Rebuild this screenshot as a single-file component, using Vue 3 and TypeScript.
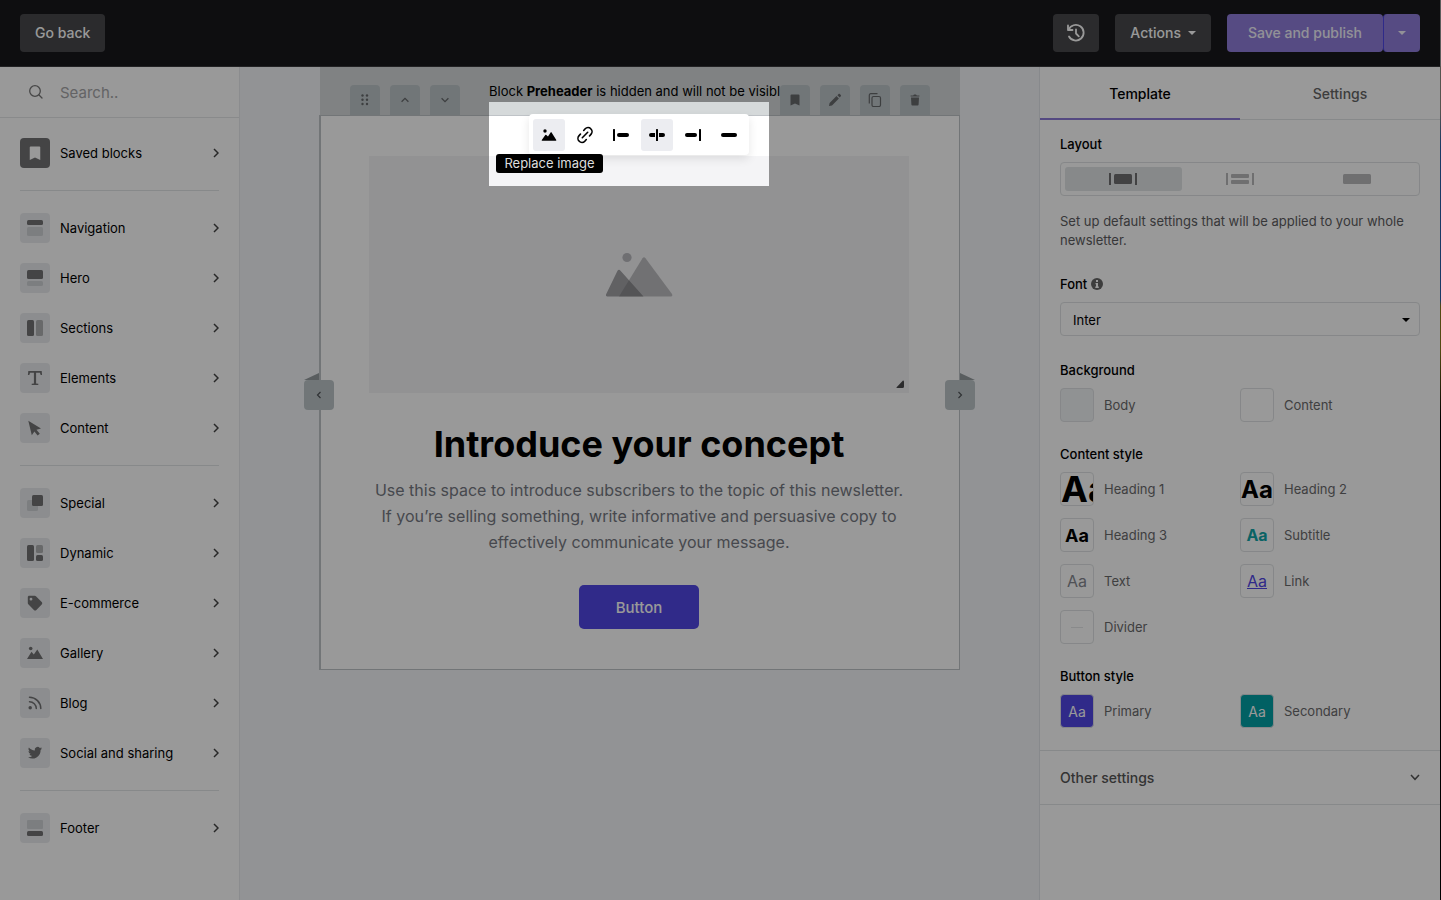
<script setup lang="ts">
import { ref } from 'vue'

interface BlockItem { label: string; icon: string; strong?: boolean }
interface StyleItem { label: string; kind: string; sample: string }

const groups: BlockItem[][] = [
  [{ label: 'Saved blocks', icon: 'saved', strong: true }],
  [
    { label: 'Navigation', icon: 'navigation' },
    { label: 'Hero', icon: 'hero' },
    { label: 'Sections', icon: 'sections' },
    { label: 'Elements', icon: 'elements' },
    { label: 'Content', icon: 'content' },
  ],
  [
    { label: 'Special', icon: 'special' },
    { label: 'Dynamic', icon: 'dynamic' },
    { label: 'E-commerce', icon: 'tag' },
    { label: 'Gallery', icon: 'gallery' },
    { label: 'Blog', icon: 'blog' },
    { label: 'Social and sharing', icon: 'social' },
  ],
  [{ label: 'Footer', icon: 'footer' }],
]

const backgrounds: StyleItem[] = [
  { label: 'Body', kind: 'bg-body', sample: '' },
  { label: 'Content', kind: 'bg-content', sample: '' },
]
const contentStyles: StyleItem[] = [
  { label: 'Heading 1', kind: 'h1', sample: 'Aa' },
  { label: 'Heading 2', kind: 'h2', sample: 'Aa' },
  { label: 'Heading 3', kind: 'h3', sample: 'Aa' },
  { label: 'Subtitle', kind: 'subtitle', sample: 'Aa' },
  { label: 'Text', kind: 'text', sample: 'Aa' },
  { label: 'Link', kind: 'link', sample: 'Aa' },
  { label: 'Divider', kind: 'divider', sample: '' },
]
const buttonStyles: StyleItem[] = [
  { label: 'Primary', kind: 'primary', sample: 'Aa' },
  { label: 'Secondary', kind: 'secondary', sample: 'Aa' },
]
const sections = [
  { title: 'Background', items: backgrounds },
  { title: 'Content style', items: contentStyles },
  { title: 'Button style', items: buttonStyles },
]

const search = ref('')
const font = ref('Inter')
</script>

<template>
  <div class="page">
    <div class="app">
      <header class="topbar">
        <button class="btn dark">Go back</button>
        <div class="topbar-right">
          <button class="btn dark history" aria-label="History">
            <svg width="20" height="20" viewBox="0 0 20 20" fill="none" stroke="currentColor" stroke-width="1.8" stroke-linecap="round" stroke-linejoin="round">
              <path d="M2.600 6.800A7.800 7.800 0 1 1 3 13.500" />
              <path d="M2 2.500v4.500h4.500" />
              <path d="M10 6.300v4.200l2.800 2.800" />
            </svg>
          </button>
          <button class="btn dark">Actions <span class="caret"></span></button>
          <div class="split">
            <button class="btn purple main">Save and publish</button>
            <button class="btn purple more" aria-label="More publish options"><span class="caret"></span></button>
          </div>
        </div>
      </header>

      <div class="workspace">
        <aside class="sidebar">
          <label class="search">
            <svg width="16" height="16" viewBox="0 0 16 16" fill="none" stroke="currentColor" stroke-width="1.300" stroke-linecap="round">
              <circle cx="7" cy="7" r="5.300" /><path d="M11 11l3 3" />
            </svg>
            <input v-model="search" type="text" placeholder="Search.." aria-label="Search" />
          </label>
          <nav>
            <ul v-for="(group, g) in groups" :key="g" class="group">
              <li v-for="item in group" :key="item.label">
                <button class="block">
                  <span class="tile" :class="{ strong: item.strong }">
                    <svg width="16" height="16" viewBox="0 0 16 16" fill="currentColor">
                      <path v-if="item.icon === 'saved'" d="M3 0.500h10a1 1 0 0 1 1 1V16l-6-3-6 3V1.500a1 1 0 0 1 1-1z" />
                      <g v-else-if="item.icon === 'navigation'">
                        <rect width="16" height="5" rx="1.500" /><rect class="soft" y="7" width="16" height="9" rx="1.500" />
                      </g>
                      <g v-else-if="item.icon === 'hero'">
                        <rect width="16" height="9" rx="1.500" /><rect class="soft" y="11" width="16" height="5" rx="1.500" />
                      </g>
                      <g v-else-if="item.icon === 'sections'">
                        <rect width="7" height="16" rx="1.500" /><rect class="mid" x="9" width="7" height="16" rx="1.500" />
                      </g>
                      <path v-else-if="item.icon === 'elements'" d="M1.300 1h13.400l.4 4h-1.400l-.8-2.200H9.100v10.600l2.200.4V15H4.700v-1.200l2.200-.4V2.800H3.100L2.300 5H.9z" />
                      <path v-else-if="item.icon === 'content'" d="M1.300 .8l12.700 7.600-4.500 1.300 3.300 4-2.200 1.700-3.200-4-2.600 3.800z" />
                      <g v-else-if="item.icon === 'special'">
                        <rect class="soft" y="5" width="11" height="11" rx="1.500" /><rect x="5" width="11" height="11" rx="1.500" />
                      </g>
                      <g v-else-if="item.icon === 'dynamic'">
                        <rect width="7" height="16" rx="1.500" /><rect class="mid" x="9" width="7" height="8" rx="1.500" /><rect x="9" y="10" width="7" height="6" rx="1.500" />
                      </g>
                      <path v-else-if="item.icon === 'tag'" fill-rule="evenodd" d="M2.200 .8h5.600c.5 0 1 .2 1.400.6l5.500 5.700c.7.7.7 1.800 0 2.500l-5.300 5.300c-.7.700-1.800.700-2.500 0L1.300 9.200A2 2 0 0 1 .8 7.900V2.200C.8 1.400 1.400.8 2.200.8zM4 2.800a1.400 1.400 0 1 0 0 2.800 1.400 1.400 0 0 0 0-2.800z" />
                      <g v-else-if="item.icon === 'gallery'">
                        <circle cx="3.700" cy="3.500" r="1.800" /><path d="M0 14l4.500-7.200 2.300 2.700L10.300 4.500 16 14z" />
                      </g>
                      <g v-else-if="item.icon === 'blog'" fill="none" stroke="currentColor" stroke-width="1.500" stroke-linecap="round">
                        <circle cx="3.200" cy="12.800" r="1" fill="currentColor" /><path d="M2.500 6.800a6.800 6.800 0 0 1 6.800 6.800M2.500 2.300a11.300 11.300 0 0 1 11.300 11.300" />
                      </g>
                      <path v-else-if="item.icon === 'social'" d="M15 3.300c-.5.300-1 .4-1.600.5.600-.4 1-.9 1.200-1.600-.5.300-1.100.600-1.800.7a2.900 2.900 0 0 0-5 2.600C5.400 5.400 3.300 4.300 1.900 2.600c-.8 1.300-.4 3 .9 3.900-.5 0-.9-.1-1.300-.4 0 1.500 1 2.600 2.300 2.900-.4.100-.9.100-1.300 0 .4 1.200 1.400 2 2.700 2A5.900 5.900 0 0 1 1 12.200 8.200 8.200 0 0 0 13.600 4.900c.6-.4 1.100-.9 1.400-1.600z" />
                      <g v-else>
                        <rect class="soft" width="16" height="9" rx="1" /><rect y="11" width="16" height="5" rx="1.500" />
                      </g>
                    </svg>
                  </span>
                  <span class="block-label">{{ item.label }}</span>
                  <svg class="chev" width="6" height="10" viewBox="0 0 6 10" fill="none" stroke="currentColor" stroke-width="1.500"><path d="M1 1l4 4-4 4" /></svg>
                </button>
              </li>
            </ul>
          </nav>
        </aside>

        <main class="canvas">
          <div class="stage">
            <div class="preheader">
              <div class="handles">
                <button class="handle" aria-label="Drag">
                  <svg width="8" height="12" viewBox="0 0 8 12" fill="currentColor"><circle cx="1.500" cy="1.500" r="1.200" /><circle cx="6" cy="1.500" r="1.200" /><circle cx="1.500" cy="5.800" r="1.200" /><circle cx="6" cy="5.800" r="1.200" /><circle cx="1.500" cy="10" r="1.200" /><circle cx="6" cy="10" r="1.200" /></svg>
                </button>
                <button class="handle" aria-label="Move up">
                  <svg width="8" height="6" viewBox="0 0 8 6" fill="none" stroke="currentColor" stroke-width="1.300"><path d="M.6 4.800L4 1.400l3.400 3.400" /></svg>
                </button>
                <button class="handle" aria-label="Move down">
                  <svg width="8" height="6" viewBox="0 0 8 6" fill="none" stroke="currentColor" stroke-width="1.300"><path d="M.6 1.200L4 4.600l3.400-3.400" /></svg>
                </button>
              </div>
              <p class="notice">Block <strong>Preheader</strong> is hidden and will not be visibl</p>
              <div class="handles">
                <button class="handle" aria-label="Save block">
                  <svg width="10" height="12" viewBox="0 0 10 12" fill="currentColor"><path d="M1.500 .5h7a1 1 0 0 1 1 1v10L5 9.500l-4.500 2v-10a1 1 0 0 1 1-1z" /></svg>
                </button>
                <button class="handle" aria-label="Edit block">
                  <svg width="14" height="14" viewBox="0 0 14 14" fill="currentColor"><path d="M1 13l.6-3L8.500 3l2.400 2.400L4 12.400zM9.400 2.200l1.200-1.100c.4-.4.9-.4 1.200 0l1 1c.4.400.4.900 0 1.200l-1.100 1.200z" /></svg>
                </button>
                <button class="handle" aria-label="Duplicate block">
                  <svg width="14" height="14" viewBox="0 0 14 14" fill="none" stroke="currentColor" stroke-width="1.200"><rect x="4" y="3.500" width="8.500" height="10" rx="1.500" /><path d="M1.300 10.500V2.300C1.300 1.300 1.900.7 2.800.7h6.700" /></svg>
                </button>
                <button class="handle" aria-label="Delete block">
                  <svg width="10" height="12" viewBox="0 0 10 12" fill="currentColor"><path d="M1 3.500h8l-.4 7a1 1 0 0 1-1 1H2.400a1 1 0 0 1-1-1zM.6 1.400h2.600L4 .5h2l.8.9h2.600v1.200H.6z" /></svg>
                </button>
              </div>
            </div>

            <article class="card">
              <div class="placeholder">
                <svg width="68" height="46" viewBox="0 0 68 46">
                  <circle cx="22" cy="5.500" r="4.600" fill="#b9b9be" />
                  <path d="M37.500 6.300q1.500-2 3 0L67 42q1 2-1 2.500H14z" fill="#bdbdc0" />
                  <path d="M12.500 18.800q1.500-2 3 0L38.500 44.500H2Q.5 44 1 42.500z" fill="#6b6b70" fill-opacity=".6" />
                </svg>
                <svg class="grip" width="8" height="8" viewBox="0 0 8 8" fill="#4a4a4c"><path d="M7 0.500q1 0 1 1V6.500q0 1.500-1.500 1.500H1q-1 0-.4-.8z" /></svg>
              </div>
              <h1>Introduce your concept</h1>
              <p class="copy">Use this space to introduce subscribers to the topic of this newsletter.<br />If you’re selling something, write informative and persuasive copy to<br />effectively communicate your message.</p>
              <button class="cta">Button</button>

              <button class="side left" aria-label="Previous variant">
                <svg class="fold" width="15" height="7" viewBox="0 0 15 7"><path d="M0 7L15 0v7z" /></svg>
                <svg width="6" height="8" viewBox="0 0 6 8" fill="none" stroke="currentColor" stroke-width="1.200"><path d="M4.500 1L1.500 4l3 3" /></svg>
              </button>
              <button class="side right" aria-label="Next variant">
                <svg class="fold" width="15" height="7" viewBox="0 0 15 7"><path d="M0 0l15 7H0z" /></svg>
                <svg width="6" height="8" viewBox="0 0 6 8" fill="none" stroke="currentColor" stroke-width="1.200"><path d="M1.500 1l3 3-3 3" /></svg>
              </button>
            </article>

            <div class="toolbar" role="toolbar" aria-label="Image tools">
              <button class="tool on" aria-label="Replace image">
                <svg width="16" height="16" viewBox="0 0 16 16" fill="currentColor"><circle cx="4" cy="4" r="1.700" /><path d="M1 13.800Q.5 13.800.8 13L4.300 7.900q.5-.5 1 0l1.700 1.500 2.600-4q.5-.7 1 0L15.300 13q.2.8-.5.8z" /></svg>
              </button>
              <button class="tool" aria-label="Link">
                <svg width="18" height="18" viewBox="0 0 18 18" fill="none" stroke="currentColor" stroke-width="1.600" stroke-linecap="round"><path d="M6.300 11.700l5.400-5.400M7.700 4.500l1.500-1.700a3.800 3.800 0 0 1 5.600 0 3.800 3.800 0 0 1 .3 5.300L13.500 10M10.300 13.500l-1.500 1.700a3.800 3.800 0 0 1-5.600 0 3.800 3.800 0 0 1-.3-5.300L4.500 8" /></svg>
              </button>
              <button class="tool" aria-label="Align left">
                <svg width="18" height="14" viewBox="0 0 18 14" fill="currentColor"><rect x="1" y="1" width="2" height="12" rx=".6" /><rect x="5" y="5" width="12" height="4" rx="2" /></svg>
              </button>
              <button class="tool on" aria-label="Align center">
                <svg width="18" height="14" viewBox="0 0 18 14" fill="currentColor"><rect x="8" y="1" width="2" height="12" rx=".6" /><path d="M3 5h4v4H3a2 2 0 0 1 0-4zM11 5h4a2 2 0 0 1 0 4h-4z" /></svg>
              </button>
              <button class="tool" aria-label="Align right">
                <svg width="18" height="14" viewBox="0 0 18 14" fill="currentColor"><rect x="15" y="1" width="2" height="12" rx=".6" /><rect x="1" y="5" width="12" height="4" rx="2" /></svg>
              </button>
              <button class="tool" aria-label="Full width">
                <svg width="18" height="14" viewBox="0 0 18 14" fill="currentColor"><rect x="1" y="5" width="16" height="4" rx="2" /></svg>
              </button>
              <span class="tooltip" role="tooltip">Replace image</span>
            </div>
            <div class="spotlight"></div>
          </div>
        </main>

        <aside class="settings">
          <div class="tabs" role="tablist">
            <button class="tab active" role="tab" aria-selected="true">Template</button>
            <button class="tab" role="tab" aria-selected="false">Settings</button>
          </div>
          <div class="panel">
            <h2>Layout</h2>
            <div class="segmented">
              <button class="seg on" aria-label="Boxed layout">
                <svg width="28" height="12" viewBox="0 0 28 12" fill="currentColor"><rect width="2" height="12" /><rect x="5" y="1" width="18" height="10" rx="1.500" /><rect x="26" width="2" height="12" /></svg>
              </button>
              <button class="seg" aria-label="Striped layout">
                <svg width="28" height="12" viewBox="0 0 28 12" fill="currentColor"><rect width="2" height="12" /><rect x="5" y="1" width="18" height="4" rx="1" /><rect x="5" y="7" width="18" height="4" rx="1" /><rect x="26" width="2" height="12" /></svg>
              </button>
              <button class="seg" aria-label="Full width layout">
                <svg width="28" height="12" viewBox="0 0 28 12" fill="currentColor"><rect y="1" width="28" height="10" rx="1.500" /></svg>
              </button>
            </div>
            <p class="hint">Set up default settings that will be applied to your whole newsletter.</p>
            <h2>
              <label for="font">Font</label>
              <svg class="info" width="12" height="12" viewBox="0 0 12 12"><circle cx="6" cy="6" r="6" fill="#676767" /><path d="M5 2h2v2H5zM4.500 5H7v3.500h.8V10H4.300V8.500H5V6.300h-.5z" fill="#fff" /></svg>
            </h2>
            <div class="select">
              <select id="font" v-model="font"><option>Inter</option></select>
              <span class="arrow"></span>
            </div>
            <template v-for="s in sections" :key="s.title">
              <h2>{{ s.title }}</h2>
              <div class="styles">
                <button v-for="i in s.items" :key="i.label" class="style">
                  <span class="swatch" :class="i.kind">{{ i.sample }}</span>{{ i.label }}
                </button>
              </div>
            </template>
          </div>
          <button class="other">
            Other settings
            <svg width="10" height="7" viewBox="0 0 10 7" fill="none" stroke="currentColor" stroke-width="1.500"><path d="M1 1l4 4.300L9 1" /></svg>
          </button>
        </aside>
      </div>
    </div>
  </div>
</template>

<style>
body { margin: 0; }
</style>

<style scoped>
* { box-sizing: border-box; }
.page {
  min-height: 100vh;
  display: flex;
  padding-right: 1px;
  overflow: hidden;
  background: linear-gradient(#9b9b9b 0 66px, #8f8a84 66px 110px, #2b60a8 146px 300px, #8a7a20 306px 350px, #000 420px);
  font-family: Inter, "Liberation Sans", sans-serif;
  font-size: 13px;
  color: #000;
}
h1, h2, p, ul { margin: 0; padding: 0; }
ul { list-style: none; }
button { font: inherit; color: inherit; border: 0; padding: 0; background: none; cursor: pointer; }
svg { display: block; flex: none; }
.app { flex: 1; display: flex; flex-direction: column; min-width: 0; }

.topbar {
  height: 67px;
  padding: 0 20px;
  display: flex;
  align-items: center;
  justify-content: space-between;
  background: #18181b;
  border-bottom: 1px solid #39393c;
}
.topbar-right { display: flex; gap: 16px; }
.btn {
  height: 38px;
  padding: 0 15px 1px;
  display: flex;
  align-items: center;
  gap: 7px;
  border-radius: 4px;
  font-size: 14px;
  font-weight: 500;
}
.dark { background: #49494c; color: #fff; }
.history { padding: 0 13px; }
.purple { background: #8f7edb; color: #f4f2fc; }
.main { padding: 0 21px 1px; }
.more { padding: 0 14px 1px; border-left: 1px solid #4f46e5; }
.split { display: flex; }
.caret { border: 4px solid transparent; border-top-color: currentColor; border-bottom: 0; }

.workspace { flex: 1; display: flex; }
.sidebar { width: 240px; background: #fff; border-right: 1px solid #e8eaed; }
.search {
  height: 51px;
  padding: 0 28px;
  display: flex;
  align-items: center;
  gap: 16px;
  border-bottom: 1px solid #e4e6e8;
  color: #777;
}
.search input { width: 120px; border: 0; padding: 0; outline: 0; background: none; font: inherit; font-size: 15px; color: #333; }
.search input::placeholder { color: #a6a6a8; opacity: 1; }
.group { margin: 0 20px; padding: 12px 0; border-bottom: 1px solid #e2e4e6; }
.group:first-child { padding-top: 10px; }
.group:last-child { border-bottom: 0; }
.block { width: 100%; height: 50px; display: flex; align-items: center; gap: 10px; text-align: left; }
.tile { width: 30px; height: 30px; display: grid; place-items: center; border-radius: 4px; background: #eaecee; color: #727274; }
.tile.strong { background: #727274; color: #fff; }
.tile.strong svg { width: 14px; }
.soft { fill: #cfd3d6; }
.mid { fill: #aeafb1; }
.block-label { flex: 1; }
.chev { color: #444; }

.canvas { flex: 1; display: flex; justify-content: center; background: #f3f5f8; }
.stage { position: relative; width: 641px; }
.preheader { height: 48px; margin-left: 1px; padding: 0 30px; display: flex; background: #d5d9da; }
.handles { display: flex; align-items: flex-end; gap: 10px; }
.handle { width: 30px; height: 30px; display: grid; place-items: center; border-radius: 4px 4px 0 0; background: #bdc5c8; color: #66696c; }
.notice { flex: 1; padding-left: 29px; line-height: 48px; white-space: nowrap; }
.card {
  position: relative;
  padding: 40px 50px 40px 48px;
  display: flex;
  flex-direction: column;
  align-items: center;
  background: #fff;
  border: 1px solid #bfc3c7;
  border-left-width: 2px;
}
.placeholder { position: relative; width: 100%; height: 237px; display: grid; place-items: center; background: #f4f4f6; }
.grip { position: absolute; right: 5px; bottom: 5px; }
h1 { margin-top: 28px; font-size: 36px; line-height: 46px; font-weight: 700; white-space: nowrap; }
.copy { margin-top: 10px; font-size: 16px; line-height: 26px; color: #767982; text-align: center; white-space: nowrap; }
.cta { width: 120px; height: 44px; margin-top: 30px; border-radius: 5px; background: #5046e4; color: #fff; font-size: 15px; font-weight: 500; }
.side { position: absolute; top: 264px; width: 30px; height: 30px; display: grid; place-items: center; border-radius: 4px; background: #bdc5c8; color: #505458; }
.left { left: -17px; }
.right { right: -16px; }
.fold { position: absolute; bottom: 100%; fill: #949b9e; }
.left .fold { left: 0; }
.right .fold { right: 0; }

.toolbar {
  position: absolute;
  top: 47px;
  left: 210px;
  height: 41px;
  padding: 4px;
  display: flex;
  align-items: center;
  gap: 4px;
  border-radius: 4px;
  background: #fff;
  box-shadow: 0 4px 10px rgba(0, 0, 0, 0.1);
}
.tool { width: 32px; height: 32px; display: grid; place-items: center; border-radius: 3px; }
.tool.on { background: #ecedf1; }
.tooltip {
  position: absolute;
  top: 40px;
  left: -33px;
  width: 107px;
  height: 19px;
  line-height: 19px;
  border-radius: 3px;
  background: #000;
  color: #ddd;
  text-align: center;
  white-space: nowrap;
}
.spotlight {
  position: absolute;
  top: 35px;
  left: 170px;
  width: 280px;
  height: 84px;
  box-shadow: 0 0 0 2000px rgba(0, 0, 0, 0.4);
  pointer-events: none;
  z-index: 10;
}

.settings { width: 401px; background: #fff; border-left: 1px solid #e2e5ea; }
.tabs { height: 53px; display: flex; border-bottom: 1px solid #e2e4e6; }
.tab { flex: 1; height: 53px; padding-top: 2px; font-size: 14px; font-weight: 500; color: #666; border-bottom: 2px solid transparent; }
.tab.active { color: #000; border-bottom-color: #8d7bd8; }
.panel { padding: 14px 20px 22px; }
h2 { display: flex; align-items: center; gap: 4px; font-size: 13px; line-height: 20px; font-weight: 500; }
.segmented { height: 34px; margin-top: 8px; padding: 4px; display: flex; border: 1px solid #dfe2e4; border-radius: 4px; }
.seg { flex: 1; display: grid; place-items: center; border-radius: 3px; color: #b9b9bb; }
.seg.on { background: #e2e5e7; color: #6e6e70; }
.hint { margin: 16px 0 24px; line-height: 19px; color: #5d5d60; }
.select { position: relative; margin: 8px 0 24px; }
.select select {
  width: 100%;
  height: 34px;
  padding: 2px 12px 0;
  display: block;
  appearance: none;
  border: 1px solid #dfe2e4;
  border-radius: 4px;
  background: #fff;
  color: #000;
  font: inherit;
}
.arrow { position: absolute; top: 16px; right: 10px; border: 4px solid transparent; border-top-color: #000; border-bottom: 0; pointer-events: none; }
.styles { margin: 8px 0 22px; display: grid; grid-template-columns: 1fr 1fr; row-gap: 12px; }
.styles:last-child { margin-bottom: 0; }
.style { display: flex; align-items: center; gap: 10px; color: #6a6a6c; text-align: left; }
.swatch {
  width: 34px;
  height: 34px;
  flex: none;
  display: flex;
  align-items: center;
  justify-content: center;
  overflow: hidden;
  border: 1px solid #dfe2e4;
  border-radius: 4px;
  color: #000;
}
.bg-body { background: #f0f3f6; }
.h1 { justify-content: flex-start; font-size: 36px; font-weight: 700; }
.h2 { font-size: 24px; font-weight: 700; }
.h3 { font-size: 18px; font-weight: 700; }
.subtitle { font-size: 16px; font-weight: 700; color: #11a5a9; }
.text { font-size: 16px; color: #85888f; }
.link { font-size: 16px; color: #5046e4; text-decoration: underline; }
.divider::after { content: ""; width: 12px; height: 1px; background: #e4e6e8; }
.primary { background: #5046e4; color: #fff; font-size: 14px; }
.secondary { background: #02a0a5; color: #fff; font-size: 14px; }
.other {
  width: 100%;
  height: 55px;
  padding: 0 20px 1px;
  display: flex;
  align-items: center;
  justify-content: space-between;
  border: solid #e2e4e6;
  border-width: 1px 0;
  font-size: 14px;
  font-weight: 500;
  color: #555;
}
</style>
